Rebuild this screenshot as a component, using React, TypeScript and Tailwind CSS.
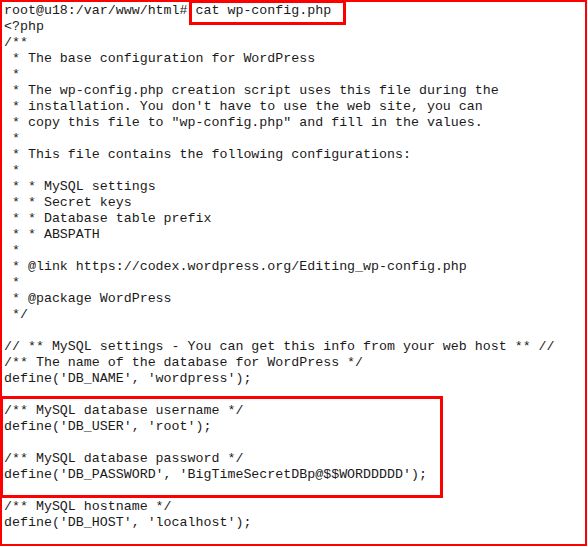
const lines = [
  "root@u18:/var/www/html# cat wp-config.php",
  "<?php",
  "/**",
  " * The base configuration for WordPress",
  " *",
  " * The wp-config.php creation script uses this file during the",
  " * installation. You don't have to use the web site, you can",
  " * copy this file to \"wp-config.php\" and fill in the values.",
  " *",
  " * This file contains the following configurations:",
  " *",
  " * * MySQL settings",
  " * * Secret keys",
  " * * Database table prefix",
  " * * ABSPATH",
  " *",
  " * @link https://codex.wordpress.org/Editing_wp-config.php",
  " *",
  " * @package WordPress",
  " */",
  "",
  "// ** MySQL settings - You can get this info from your web host ** //",
  "/** The name of the database for WordPress */",
  "define('DB_NAME', 'wordpress');",
  "",
  "/** MySQL database username */",
  "define('DB_USER', 'root');",
  "",
  "/** MySQL database password */",
  "define('DB_PASSWORD', 'BigTimeSecretDBp@$$WORDDDDD');",
  "",
  "/** MySQL hostname */",
  "define('DB_HOST', 'localhost');",
];

export default function App() {
  return (
    <div className="relative w-[587px] h-[546px] bg-white border-2 border-[#ff0000] overflow-hidden">
      <pre className="pl-[2px] pt-[1px] font-['Courier_New','Nimbus_Mono_PS','Nimbus_Mono_L','FreeMono','Liberation_Mono',monospace] text-[13.3px] leading-[16px] text-[#1a1a1a]">
        {lines.map((line, i) => (
          <div key={i} className="h-[16px] whitespace-pre">
            {line}
          </div>
        ))}
      </pre>

      {/* highlight: command */}
      <div className="absolute left-[187px] top-[-2px] w-[157px] h-[25px] border-[3px] border-[#ff0000]" />

      {/* highlight: credentials */}
      <div className="absolute left-[-2px] top-[394px] w-[443px] h-[102px] border-[3px] border-[#ff0000]" />
    </div>
  );
}
